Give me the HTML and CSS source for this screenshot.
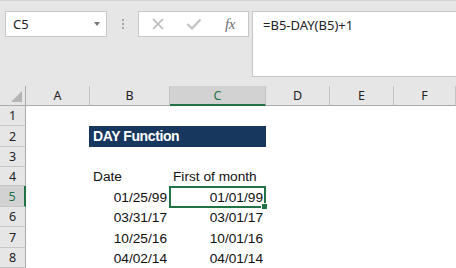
FILE: index.html
```html
<!DOCTYPE html>
<html lang="en">
<head>
  <meta charset="UTF-8">
  <title>DAY function</title>
  <link rel="stylesheet" href="styles.css">
</head>
<body>

  <div class="toolbar">
    <div class="name-box">
      <span>C5</span>
      <span class="drop-arrow"></span>
    </div>
    <div class="grip">
      <span></span><span></span><span></span>
    </div>
    <div class="fx-box">
      <svg class="icon" width="14" height="14" viewBox="0 0 14 14">
        <path d="M2 2 L12 12 M12 2 L2 12" stroke="#b8b8b8" stroke-width="1.6" fill="none"/>
      </svg>
      <svg class="icon" width="16" height="14" viewBox="0 0 16 14">
        <path d="M1.5 7 L6 11.5 L14.5 2.5" stroke="#c2c2c2" stroke-width="2.2" fill="none"/>
      </svg>
      <span class="fx">fx</span>
    </div>
    <div class="formula-bar">=B5-DAY(B5)+1</div>
  </div>

  <div class="sheet">
    <div class="corner"></div>
    <div class="col-head">A</div>
    <div class="col-head">B</div>
    <div class="col-head active">C</div>
    <div class="col-head">D</div>
    <div class="col-head">E</div>
    <div class="col-head">F</div>

    <div class="row-head">1</div>
    <div class="cell"></div><div class="cell"></div><div class="cell"></div><div class="cell"></div><div class="cell"></div><div class="cell"></div>

    <div class="row-head tall">2</div>
    <div class="cell"></div>
    <div class="cell title">DAY Function</div>
    <div class="cell"></div><div class="cell"></div><div class="cell"></div>

    <div class="row-head">3</div>
    <div class="cell"></div><div class="cell"></div><div class="cell"></div><div class="cell"></div><div class="cell"></div><div class="cell"></div>

    <div class="row-head short">4</div>
    <div class="cell"></div>
    <div class="cell">Date</div>
    <div class="cell">First of month</div>
    <div class="cell"></div><div class="cell"></div><div class="cell"></div>

    <div class="row-head tall active">5</div>
    <div class="cell"></div>
    <div class="cell num">01/25/99</div>
    <div class="cell num selected">01/01/99</div>
    <div class="cell"></div><div class="cell"></div><div class="cell"></div>

    <div class="row-head">6</div>
    <div class="cell"></div>
    <div class="cell num">03/31/17</div>
    <div class="cell num">03/01/17</div>
    <div class="cell"></div><div class="cell"></div><div class="cell"></div>

    <div class="row-head tall">7</div>
    <div class="cell"></div>
    <div class="cell num">10/25/16</div>
    <div class="cell num">10/01/16</div>
    <div class="cell"></div><div class="cell"></div><div class="cell"></div>

    <div class="row-head">8</div>
    <div class="cell"></div>
    <div class="cell num">04/02/14</div>
    <div class="cell num">04/01/14</div>
    <div class="cell"></div><div class="cell"></div><div class="cell"></div>
  </div>

</body>
</html>
```

FILE: styles.css
```css
body {
  margin: 0;
  padding: 0;
  width: 456px;
  height: 268px;
  overflow: hidden;
  background: #fff;
  font-family: 'Liberation Sans', Arial, sans-serif;
}

.toolbar {
  height: 86px;
  box-sizing: border-box;
  background: #e6e6e6;
  border-top: 1px solid #d4d4d4;
  display: flex;
  align-items: flex-start;
  padding: 10px 0 0 5px;
  font-family: 'Noto Sans', 'Open Sans', sans-serif;
}

.name-box {
  width: 102px;
  height: 26px;
  box-sizing: border-box;
  background: #fff;
  border: 1px solid #c6c6c6;
  display: flex;
  align-items: center;
  justify-content: space-between;
  padding: 0 6px 0 7px;
  font-size: 13px;
  color: #222;
}

.drop-arrow {
  width: 0;
  height: 0;
  border-left: 3.5px solid transparent;
  border-right: 3.5px solid transparent;
  border-top: 4px solid #777;
}

.grip {
  width: 31px;
  height: 26px;
  display: flex;
  flex-direction: column;
  align-items: center;
  justify-content: center;
  gap: 2px;
}

.grip span {
  width: 2px;
  height: 2px;
  background: #a6a6a6;
}

.fx-box {
  width: 111px;
  height: 26px;
  box-sizing: border-box;
  background: #fff;
  border: 1px solid #c6c6c6;
  display: flex;
  align-items: center;
  padding-left: 12px;
  gap: 21px;
}

.fx {
  font-family: 'Liberation Serif', 'Times New Roman', serif;
  font-style: italic;
  font-size: 15px;
  color: #6e6e6e;
  margin-left: 2px;
  letter-spacing: -0.5px;
}

.formula-bar {
  margin-left: 3px;
  flex: 1;
  height: 66px;
  box-sizing: border-box;
  background: #fff;
  border: 1px solid #c6c6c6;
  border-right: none;
  padding: 4px 0 0 10px;
  font-size: 13px;
  color: #222;
}

.sheet {
  display: grid;
  grid-template-columns: 26px 64px 80px 96px 64px 64px 1fr;
  grid-template-rows: 20px 20px 21px 20px 19px 21px 20px 21px 20px;
  font-size: 13.7px;
  color: #111;
}

.corner,
.col-head,
.row-head {
  background: #e6e6e6;
  box-sizing: border-box;
  font-family: 'Noto Sans', 'Open Sans', sans-serif;
  font-size: 12.5px;
  color: #222;
  display: flex;
  align-items: center;
  justify-content: center;
}

.corner {
  position: relative;
  border-right: 1px solid #ababab;
  border-bottom: 1px solid #ababab;
}

.corner::after {
  content: "";
  position: absolute;
  right: 3px;
  bottom: 3px;
  width: 0;
  height: 0;
  border-left: 11px solid transparent;
  border-bottom: 11px solid #b4b4b4;
}

.col-head {
  border-right: 1px solid #c3c3c3;
  border-bottom: 1px solid #ababab;
}

.col-head.active {
  background: #d2d2d2;
  color: #217346;
  border-bottom: 2px solid #217346;
}

.row-head {
  border-right: 1px solid #ababab;
  border-bottom: 1px solid #c6c6c6;
}

.row-head.active {
  background: #d2d2d2;
  color: #217346;
  border-right: 2px solid #217346;
}

.cell {
  white-space: nowrap;
  padding: 0 3px;
  display: flex;
  align-items: flex-end;
  padding-bottom: 1px;
  line-height: 17px;
}

.cell.num {
  justify-content: flex-end;
}

.cell.title {
  grid-column: span 2;
  margin-left: -1px;
  padding-left: 4px;
  background: #17375e;
  color: #fff;
  font-weight: bold;
  font-size: 14px;
  letter-spacing: -0.4px;
  align-items: center;
  padding-bottom: 0;
}

.cell.selected {
  position: relative;
}

.cell.selected::after {
  content: "";
  position: absolute;
  left: -1px;
  top: 0;
  right: 0;
  bottom: -1px;
  border: 2px solid #217346;
}

.cell.selected::before {
  content: "";
  position: absolute;
  right: -2px;
  bottom: -3px;
  width: 5px;
  height: 5px;
  background: #217346;
  border: 1px solid #fff;
  z-index: 1;
}
```
